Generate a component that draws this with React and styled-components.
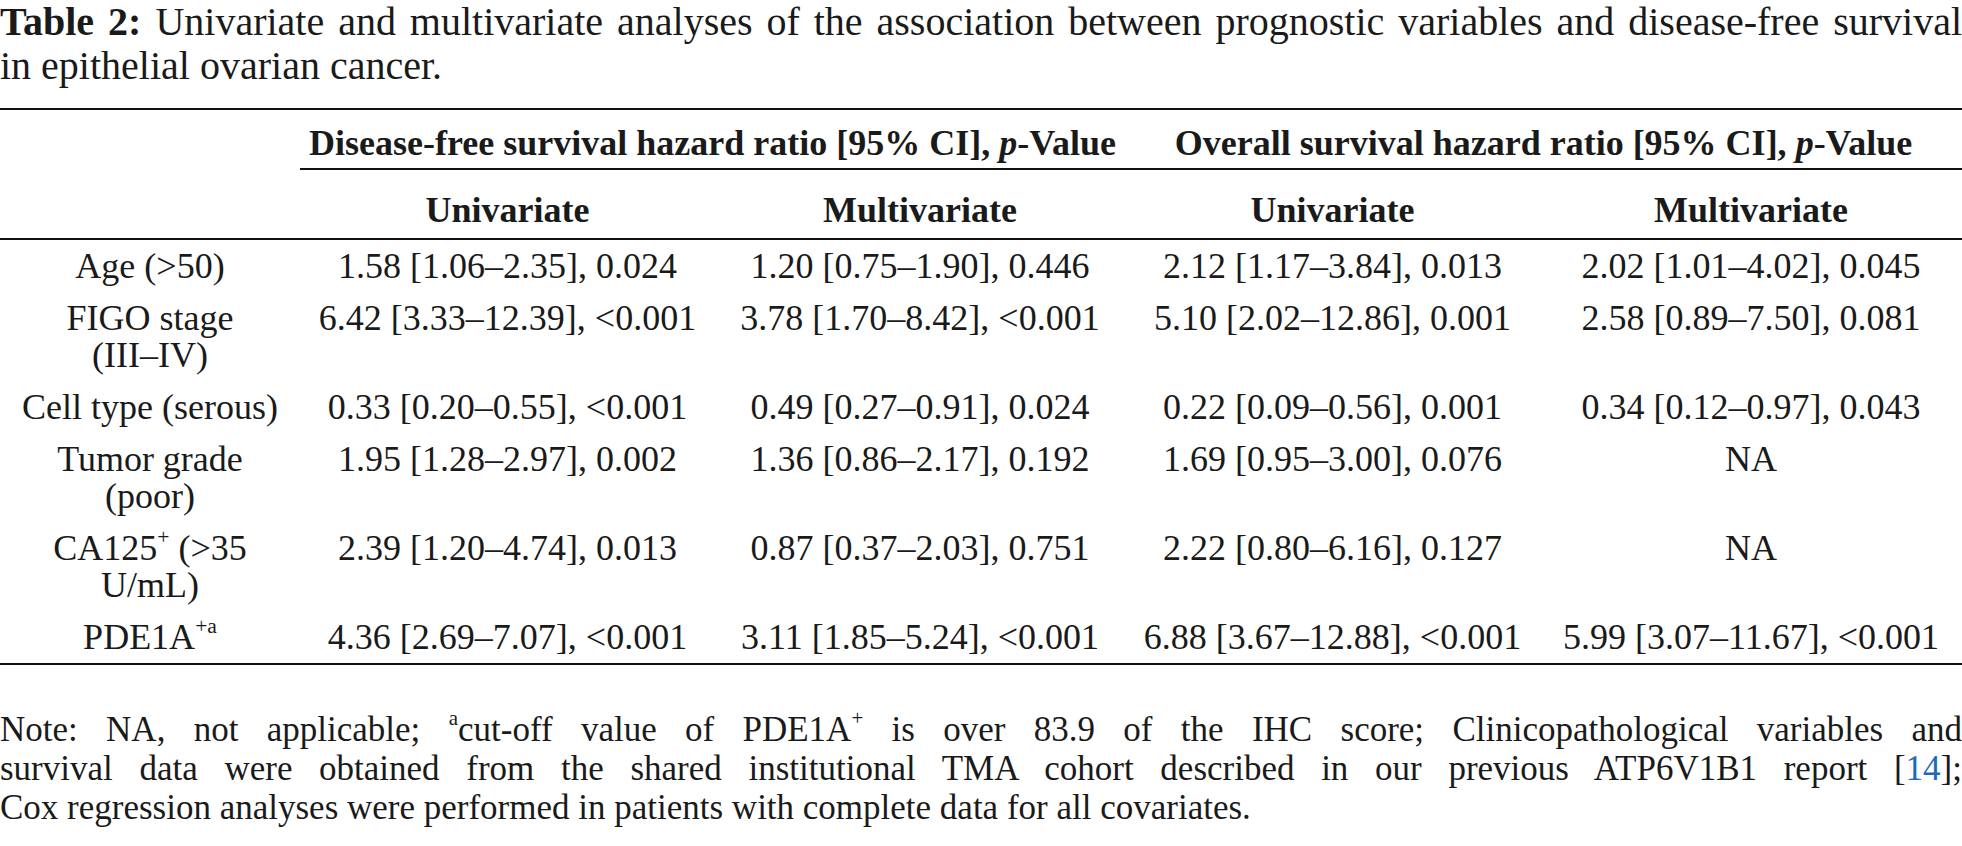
import styled, { createGlobalStyle } from "styled-components";

const GlobalStyle = createGlobalStyle`
  html, body {
    margin: 0;
    padding: 0;
    background: #ffffff;
  }
  body {
    font-family: "Liberation Serif", "Times New Roman", serif;
    color: #1a1a1a;
  }
`;

const Page = styled.div`
  width: 1962px;
  overflow: hidden;
`;

const Caption = styled.div`
  font-size: 40px;
  line-height: 44px;
  margin-bottom: 20px;
`;

const CaptionLabel = styled.b`
  font-weight: bold;
  margin-right: 14px;
`;

const Line = styled.span`
  display: block;
  text-align: ${(p) => (p.$justify ? "justify" : "inherit")};
  text-align-last: ${(p) => (p.$justify ? "justify" : "auto")};
`;

const Sup = styled.sup`
  font-size: 0.6em;
  line-height: 0;
  vertical-align: 0.75em;
`;

const Table = styled.table`
  width: 1962px;
  table-layout: fixed;
  border-collapse: separate;
  border-spacing: 0;
  border-top: 2px solid #111;
  border-bottom: 2px solid #111;
  font-size: 36px;
  line-height: 37px;
`;

const GroupCorner = styled.th`
  border-bottom: 2px solid #111;
  padding: 0;
`;

const GroupHead = styled.th`
  font-weight: bold;
  text-align: center;
  white-space: nowrap;
  padding: 15px 0 6px;
  border-bottom: 2px solid #111;
`;

const SubHead = styled.th`
  font-weight: bold;
  text-align: center;
  padding: 22px 0 9px;
  border-bottom: 2px solid #111;
`;

const Cell = styled.td`
  text-align: center;
  vertical-align: top;
  white-space: nowrap;
  padding: 8px 0 7px;
`;

const Note = styled.div`
  margin-top: 45px;
  font-size: 35px;
  line-height: 39px;
`;

const Ref = styled.a`
  color: #1c6bb8;
  text-decoration: none;
`;

const rows = [
  {
    label: ["Age (>50)"],
    values: ["1.58 [1.06–2.35], 0.024", "1.20 [0.75–1.90], 0.446", "2.12 [1.17–3.84], 0.013", "2.02 [1.01–4.02], 0.045"],
  },
  {
    label: ["FIGO stage", "(III–IV)"],
    values: ["6.42 [3.33–12.39], <0.001", "3.78 [1.70–8.42], <0.001", "5.10 [2.02–12.86], 0.001", "2.58 [0.89–7.50], 0.081"],
  },
  {
    label: ["Cell type (serous)"],
    values: ["0.33 [0.20–0.55], <0.001", "0.49 [0.27–0.91], 0.024", "0.22 [0.09–0.56], 0.001", "0.34 [0.12–0.97], 0.043"],
  },
  {
    label: ["Tumor grade", "(poor)"],
    values: ["1.95 [1.28–2.97], 0.002", "1.36 [0.86–2.17], 0.192", "1.69 [0.95–3.00], 0.076", "NA"],
  },
  {
    label: [
      <>
        CA125<Sup>+</Sup> (&gt;35
      </>,
      "U/mL)",
    ],
    values: ["2.39 [1.20–4.74], 0.013", "0.87 [0.37–2.03], 0.751", "2.22 [0.80–6.16], 0.127", "NA"],
  },
  {
    label: [
      <>
        PDE1A<Sup>+a</Sup>
      </>,
    ],
    values: ["4.36 [2.69–7.07], <0.001", "3.11 [1.85–5.24], <0.001", "6.88 [3.67–12.88], <0.001", "5.99 [3.07–11.67], <0.001"],
  },
];

const colWidths = [300, 415, 410, 415, 422];

export default function App() {
  return (
    <Page>
      <GlobalStyle />
      <Caption>
        <Line $justify>
          <CaptionLabel>Table 2:</CaptionLabel>Univariate and multivariate analyses of the association between
          prognostic variables and disease-free survival
        </Line>
        <Line>in epithelial ovarian cancer.</Line>
      </Caption>

      <Table>
        <colgroup>
          {colWidths.map((w, i) => (
            <col key={i} style={{ width: w }} />
          ))}
        </colgroup>
        <thead>
          <tr>
            <GroupCorner rowSpan={2} />
            <GroupHead colSpan={2}>
              Disease-free survival hazard ratio [95% CI], <i>p</i>-Value
            </GroupHead>
            <GroupHead colSpan={2}>
              Overall survival hazard ratio [95% CI], <i>p</i>-Value
            </GroupHead>
          </tr>
          <tr>
            <SubHead>Univariate</SubHead>
            <SubHead>Multivariate</SubHead>
            <SubHead>Univariate</SubHead>
            <SubHead>Multivariate</SubHead>
          </tr>
        </thead>
        <tbody>
          {rows.map((row, i) => (
            <tr key={i}>
              <Cell>
                {row.label.map((part, j) => (
                  <Line key={j}>{part}</Line>
                ))}
              </Cell>
              {row.values.map((v, j) => (
                <Cell key={j}>{v}</Cell>
              ))}
            </tr>
          ))}
        </tbody>
      </Table>

      <Note>
        <Line $justify>
          Note: NA, not applicable; <Sup>a</Sup>cut-off value of PDE1A<Sup>+</Sup> is over 83.9 of the IHC score;
          Clinicopathological variables and
        </Line>
        <Line $justify>
          survival data were obtained from the shared institutional TMA cohort described in our previous ATP6V1B1
          report [<Ref href="#ref14">14</Ref>];
        </Line>
        <Line>Cox regression analyses were performed in patients with complete data for all covariates.</Line>
      </Note>
    </Page>
  );
}
